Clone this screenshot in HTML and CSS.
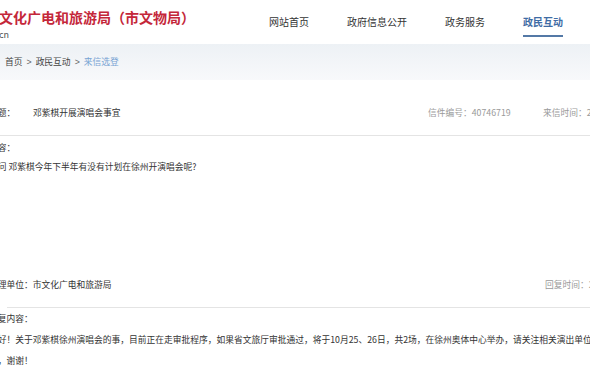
FILE: index.html
```html
<!DOCTYPE html>
<html lang="zh-CN">
<head>
	<meta charset="UTF-8">
	<title>来信选登</title>
	<link rel="stylesheet" href="styles.css">
</head>
<body>
	<!--1. 头部-->
	<header class="top">
		<div class="logo">
			<h1 class="logo-tit">文化广电和旅游局（市文物局）</h1>
			<p class="logo-url">cn</p>
		</div>
		<nav class="gnb">
			<ul>
				<li><a href="#">网站首页</a></li>
				<li><a href="#">政府信息公开</a></li>
				<li><a href="#">政务服务</a></li>
				<li class="on"><a href="#">政民互动</a></li>
			</ul>
		</nav>
	</header>

	<!--2. 位置-->
	<div class="crumb">
		<a href="#">首页</a><span class="sep">&gt;</span><a href="#">政民互动</a><span class="sep">&gt;</span><span class="cur">来信选登</span>
	</div>

	<!--3. 信件内容-->
	<section class="letter">
		<div class="row">
			<div class="main"><span class="lbl">标题：</span>邓紫棋开展演唱会事宜</div>
			<div class="meta">信件编号：40746719</div>
			<div class="meta">来信时间：2025-07-14</div>
		</div>
		<div class="txt txt-ask">
			<p>内容：</p>
			<p>请问 邓紫棋今年下半年有没有计划在徐州开演唱会呢?</p>
		</div>

		<div class="row row-reply">
			<div class="main">办理单位：市文化广电和旅游局</div>
			<div class="meta meta-end">回复时间：2025-07-16</div>
		</div>
		<div class="txt">
			<p>回复内容：</p>
			<p class="reply">您好！关于邓紫棋徐州演唱会的事，目前正在走审批程序，如果省文旅厅审批通过，将于10月25、26日，共2场，在徐州奥体中心举办，请关注相关演出单位发布的信<br>息，谢谢！</p>
		</div>
	</section>
</body>
</html>
```

FILE: styles.css
```css
html,body,ul,h1,p{
	margin: 0;
	padding: 0;
}
html,body{
	overflow: hidden;
}
body{
	width: 590px;
	background-color: #fff;
	font-family: "Noto Sans CJK SC", sans-serif;
	color: #333;
}
ul{
	list-style: none;
}
a{
	color: inherit;
	text-decoration: none;
}

/* 头部 */
.top{
	display: flex;
	justify-content: space-between;
	height: 44px;
	padding-right: 27px;
}
.logo{
	margin-left: -1px;
	padding-top: 8px;
}
.logo-tit{
	font-size: 14px;
	line-height: 19px;
	font-weight: bold;
	color: #c4273a;
	white-space: nowrap;
}
.logo-url{
	margin-top: 2px;
	font-size: 9px;
	line-height: 12px;
	color: #555;
}

/* 메뉴 */
.gnb ul{
	display: flex;
	gap: 38px;
}
.gnb a{
	display: block;
	padding: 15px 0 6px;
	font-size: 10px;
	line-height: 14px;
	border-bottom: 2px solid transparent;
	white-space: nowrap;
}
.gnb .on a{
	color: #3f6ca5;
	font-weight: bold;
	border-bottom-color: #5479a6;
}

/* 位置 */
.crumb{
	height: 36px;
	padding-left: 5px;
	background: linear-gradient(#edf1f5, #f8f9fb);
	font-size: 8.75px;
	line-height: 36px;
	color: #444;
}
.crumb .sep{
	padding: 0 4px;
	font-family: "Liberation Sans", sans-serif;
	color: #666;
}
.crumb .cur{
	color: #78a3d3;
}

/* 信件 */
.letter{
	width: 700px;
	margin-left: -11px;
	font-size: 8.75px;
	white-space: nowrap;
}
.row{
	display: grid;
	grid-template-columns: 439px 115px auto;
	padding: 23px 0 12px;
	line-height: 20px;
	border-bottom: 1px solid #e4e4e4;
}
.row .lbl{
	display: inline-block;
	width: 44px;
}
.meta{
	color: #9a9a9a;
}
.meta-end{
	grid-column: 3;
}
.row-reply{
	margin-left: 18px;
	padding: 20px 0 12px;
}
.row-reply .main{
	margin-left: -18px;
}
.row-reply .meta-end{
	margin-left: -16px;
}

.txt{
	padding-top: 1px;
	line-height: 20px;
}
.txt-ask{
	min-height: 117px;
	padding-top: 2px;
	line-height: 19px;
}
.reply{
	line-height: 21px;
}
```
